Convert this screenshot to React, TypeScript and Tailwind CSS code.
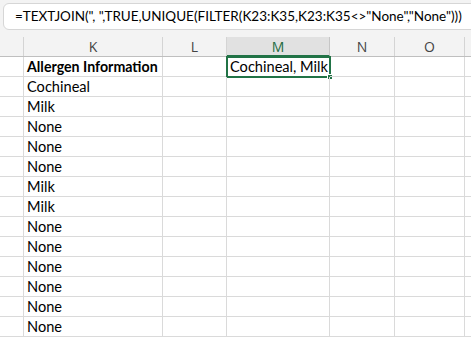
const cols = [
  { key: 'K', w: 139 },
  { key: 'L', w: 64 },
  { key: 'M', w: 103 },
  { key: 'N', w: 65 },
  { key: 'O', w: 70 },
]

const values = [
  'Allergen Information',
  'Cochineal',
  'Milk',
  'None',
  'None',
  'None',
  'Milk',
  'Milk',
  'None',
  'None',
  'None',
  'None',
  'None',
  'None',
]

export default function App() {
  return (
    <div className="w-[471px] h-[337px] overflow-hidden bg-white font-['Lato',sans-serif]">
      {/* formula bar */}
      <div className="h-[37px] bg-[#f3f3f3] pt-[3px] pl-[3px]">
        <div className="h-[27px] w-[500px] bg-white border border-[#d6d6d6] rounded-[6px] flex items-center pl-[11px] font-['Lato',sans-serif] text-[13.5px] text-black whitespace-nowrap">
          =TEXTJOIN(", ",TRUE,UNIQUE(FILTER(K23:K35,K23:K35&lt;&gt;"None","None")))
        </div>
      </div>

      {/* column headers */}
      <div className="flex h-[20px] bg-[#f3f3f3] border-b border-[#bfbfbf]">
        <div className="w-[24px] shrink-0 border-r border-[#d4d4d4]" />
        {cols.map((c) => (
          <div
            key={c.key}
            className={
              c.key === 'M'
                ? 'shrink-0 flex items-center justify-center bg-[#e1e1e1] border-r border-[#c6c6c6] border-b-2 border-b-[#217346] -mb-px text-[#1e6b41] text-[14px] font-["Open_Sans",sans-serif]'
                : 'shrink-0 flex items-center justify-center border-r border-[#d4d4d4] text-[#444] text-[14px] font-["Open_Sans",sans-serif]'
            }
            style={{ width: c.w }}
          >
            {c.key}
          </div>
        ))}
        <div className="flex-1" />
      </div>

      {/* rows */}
      {values.map((v, i) => (
        <div key={i} className="flex h-[20px]">
          <div className="w-[24px] shrink-0 border-r border-b border-[#dadada]" />
          {cols.map((c) => (
            <div
              key={c.key}
              className="relative shrink-0 border-r border-b border-[#dadada] text-[14.6px] leading-[19px] text-black pl-[3px] whitespace-nowrap"
              style={{ width: c.w }}
            >
              {c.key === 'K' && (
                <span className={i === 0 ? 'font-bold text-[14.2px]' : ''}>{v}</span>
              )}
              {c.key === 'M' && i === 0 && (
                <div className="absolute -left-px -top-px w-[105px] h-[22px] border-2 border-[#217346] pl-[2px] leading-[17px]">
                  Cochineal, Milk
                  <div className="absolute -right-[4px] -bottom-[4px] w-[6px] h-[6px] bg-[#217346] border border-white" />
                </div>
              )}
            </div>
          ))}
          <div className="flex-1 border-b border-[#dadada]" />
        </div>
      ))}
    </div>
  )
}
